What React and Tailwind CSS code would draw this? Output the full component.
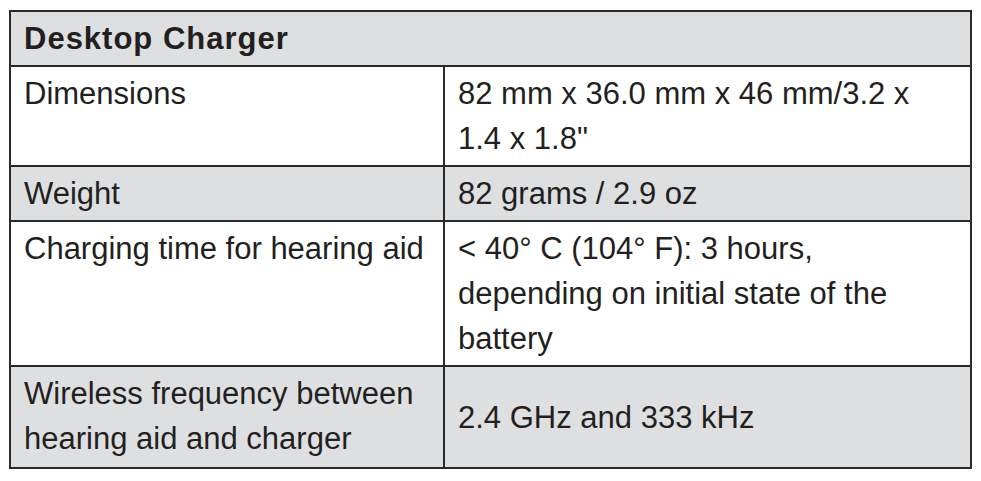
const rows = [
  { label: "Dimensions", value: "82 mm x 36.0 mm x 46 mm/3.2 x 1.4 x 1.8\"", shaded: false },
  { label: "Weight", value: "82 grams / 2.9 oz", shaded: true },
  { label: "Charging time for hearing aid", value: "< 40° C (104° F): 3 hours, depending on initial state of the battery", shaded: false },
  { label: "Wireless frequency between hearing aid and charger", value: "2.4 GHz and 333 kHz", shaded: true, center: true },
];

export default function App() {
  return (
    <div className="w-[981px] h-[481px] bg-white pt-[10px] pl-[9px] text-[#231f20]" style={{ fontFamily: "'Liberation Sans', Arial, sans-serif" }}>
      <div className="w-[963px] border-2 border-[#2a2a2a]">
        <div className="bg-[#dedfe1] border-b-2 border-[#2a2a2a] px-[13px] pt-[4px] pb-[4px] text-[31px] leading-[45px] font-bold tracking-[1px]">
          Desktop Charger
        </div>
        {rows.map((row, i) => {
          const last = i === rows.length - 1;
          return (
            <div
              key={i}
              className={`grid grid-cols-[434px_1fr] text-[31px] leading-[45px] ${row.shaded ? "bg-[#dedfe1]" : "bg-white"} ${last ? "" : "border-b-2 border-[#2a2a2a]"}`}
            >
              <div className={`border-r-2 border-[#2a2a2a] pl-[13px] pr-2 pt-[4px] ${last ? "pb-[6px]" : "pb-[4px]"}`}>{row.label}</div>
              <div className={`pl-[13px] pr-[41px] pt-[4px] pb-[4px] ${row.center ? "flex items-center" : ""}`}>{row.value}</div>
            </div>
          );
        })}
      </div>
    </div>
  );
}
